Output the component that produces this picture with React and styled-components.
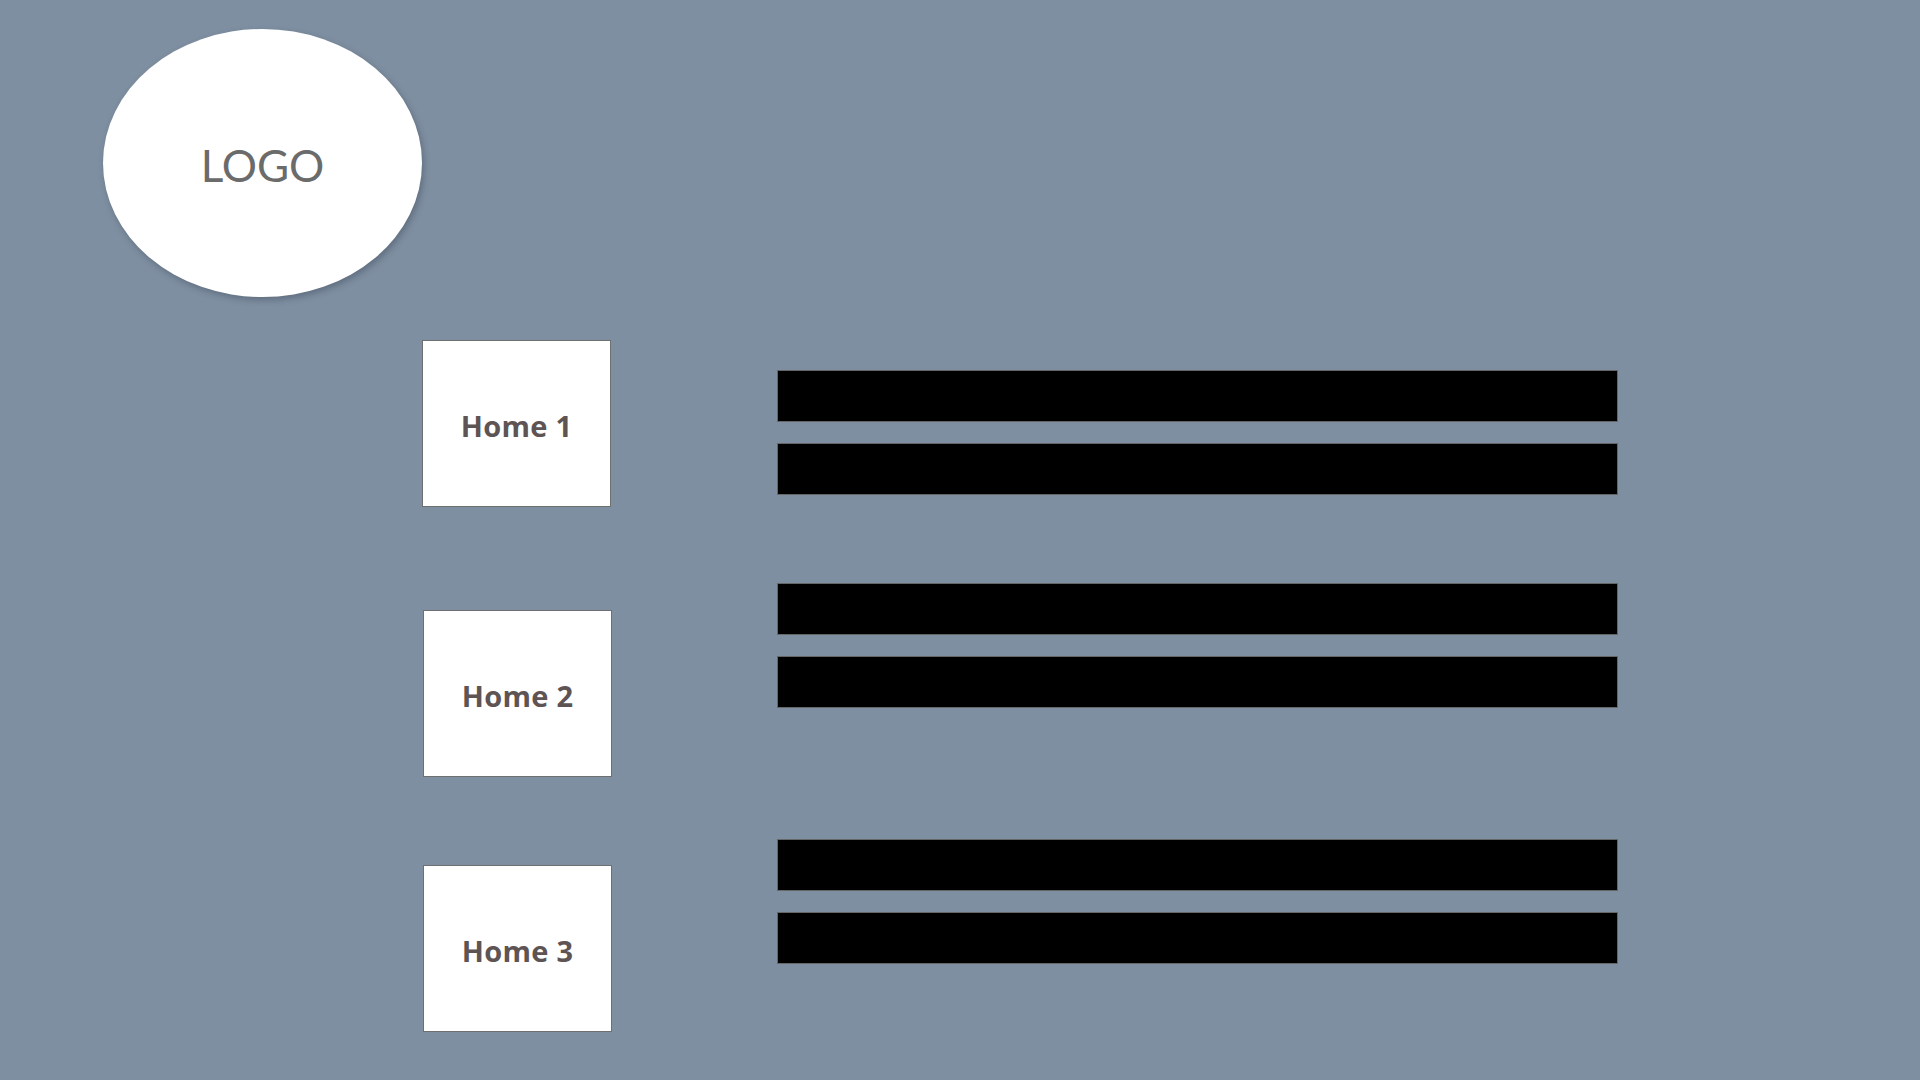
import React from "react";
import styled, { createGlobalStyle } from "styled-components";

const GlobalStyle = createGlobalStyle`
	html, body {
		margin: 0;
		padding: 0;
		background: #7e8fa1;
	}
	body {
		font-family: "Open Sans", "Noto Sans", sans-serif;
		width: 1920px;
		height: 1080px;
		overflow: hidden;
	}
`;

const Page = styled.div`
	width: 1920px;
	height: 1080px;
	background: #7e8fa1;
	box-sizing: border-box;
	padding: 29px 0 0 103px;
`;

const Logo = styled.div`
	width: 319px;
	height: 268px;
	box-sizing: border-box;
	padding-top: 4px;
	border-radius: 50%;
	background: #ffffff;
	box-shadow: 2px 3px 6px rgba(40, 50, 65, 0.35);
	display: flex;
	align-items: center;
	justify-content: center;
	font-family: "Lato", "Open Sans", sans-serif;
	font-size: 44px;
	font-weight: 400;
	color: #6b6b6b;
`;

const Main = styled.div`
	display: flex;
	gap: 165px;
	padding-left: 319px;
`;

const NavColumn = styled.nav`
	display: flex;
	flex-direction: column;
	padding-top: 43px;
`;

const HomeBox = styled.a`
	width: 189px;
	height: 167px;
	box-sizing: border-box;
	padding-top: 4px;
	margin-top: ${(props) => props.offset}px;
	margin-left: ${(props) => props.shift || 0}px;
	background: #ffffff;
	border: 1px solid #6f6f6f;
	display: flex;
	align-items: center;
	justify-content: center;
	font-size: 29px;
	font-weight: 700;
	letter-spacing: 0.3px;
	color: #5e5454;
	text-decoration: none;
`;

const Content = styled.div`
	display: flex;
	flex-direction: column;
	padding-top: 73px;
`;

const BarGroup = styled.div`
	display: flex;
	flex-direction: column;
	gap: 21px;
	margin-top: ${(props) => props.offset}px;
`;

const Bar = styled.div`
	width: 841px;
	height: 52px;
	box-sizing: border-box;
	background: #000000;
	border: 1px solid #666666;
`;

const homes = [
	{ label: "Home 1", offset: 0, shift: 0 },
	{ label: "Home 2", offset: 103, shift: 1 },
	{ label: "Home 3", offset: 88, shift: 1 },
];

const groups = [0, 88, 131];

const App = () => {
	return (
		<>
			<GlobalStyle />
			<Page>
				<Logo>LOGO</Logo>
				<Main>
					<NavColumn>
						{homes.map((home) => (
							<HomeBox
								key={home.label}
								offset={home.offset}
								shift={home.shift}
							>
								{home.label}
							</HomeBox>
						))}
					</NavColumn>
					<Content>
						{groups.map((offset, i) => (
							<BarGroup key={i} offset={offset}>
								<Bar />
								<Bar />
							</BarGroup>
						))}
					</Content>
				</Main>
			</Page>
		</>
	);
};

export default App;
